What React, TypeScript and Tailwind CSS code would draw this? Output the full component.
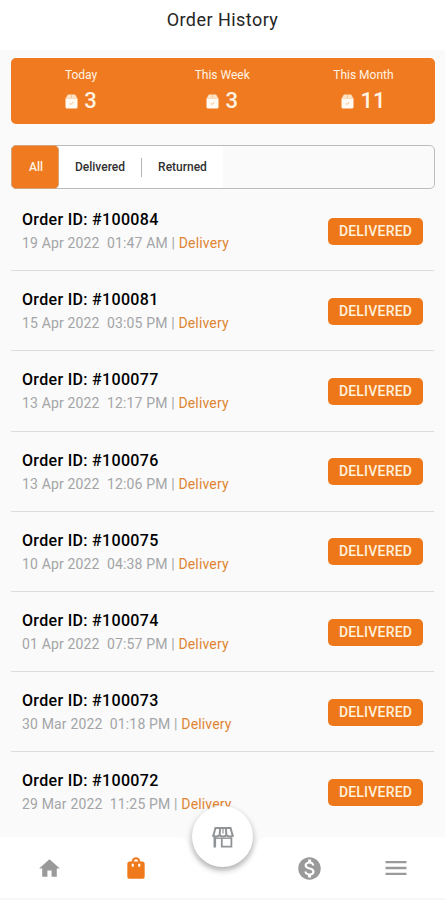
import { clsx } from 'clsx'
import { MdHome, MdMenu, MdMonetizationOn, MdShoppingBag } from 'react-icons/md'

interface Order {
  id: string
  date: string
  time: string
}

const orders: Order[] = [
  { id: '100084', date: '19 Apr 2022', time: '01:47 AM' },
  { id: '100081', date: '15 Apr 2022', time: '03:05 PM' },
  { id: '100077', date: '13 Apr 2022', time: '12:17 PM' },
  { id: '100076', date: '13 Apr 2022', time: '12:06 PM' },
  { id: '100075', date: '10 Apr 2022', time: '04:38 PM' },
  { id: '100074', date: '01 Apr 2022', time: '07:57 PM' },
  { id: '100073', date: '30 Mar 2022', time: '01:18 PM' },
  { id: '100072', date: '29 Mar 2022', time: '11:25 PM' },
]

const stats = [
  { label: 'Today', value: 3 },
  { label: 'This Week', value: 3 },
  { label: 'This Month', value: 11 },
]

function PackageIcon() {
  return (
    <svg viewBox="0 0 13 15" className="h-[15px] w-[13px]" aria-hidden="true">
      <path d="M3.4 0.5h6.2q.6 0 .9.5l1.6 3H.9l1.6-3q.3-.5.9-.5z" fill="#fde3c6" />
      <path d="M.5 4.2h12V13a1.5 1.5 0 0 1-1.5 1.5H2A1.5 1.5 0 0 1 .5 13z" fill="#fffaf2" />
      <path d="M6.5 0.8V4" stroke="#f6b882" strokeWidth="0.7" />
      <path d="M4.8 9.4l1.2 1.1 2.2-2.4" fill="none" stroke="#f0b078" strokeWidth="0.9" />
    </svg>
  )
}

function StoreIcon() {
  return (
    <svg
      viewBox="0 0 22 22"
      className="h-[22px] w-[22px]"
      fill="none"
      stroke="#919496"
      strokeWidth="2"
      aria-hidden="true"
    >
      <path d="M2.8 2h16.4" />
      <path d="M3.6 1.6L1.4 9.4M18.4 1.6l2.2 7.8M8.2 1.6L7.6 9M13.8 1.6l.6 7.4" />
      <path d="M11 2v5.5" strokeWidth="1.2" />
      <path d="M.4 9.2c1.6 1.8 5 1.8 7.2 0 1.8 1.8 5 1.8 6.8 0 2.2 1.8 5.6 1.8 7.2 0" />
      <path d="M2.8 10.5v11" strokeWidth="2.6" />
      <path d="M9.8 12.4v8.2h9.6v-9.2" strokeWidth="1.8" />
      <path d="M2 12.2h17.5" strokeWidth="1.4" />
    </svg>
  )
}

function StatsCard() {
  return (
    <section className="mr-[10.5px] ml-[11px] mt-2 grid h-[66px] grid-cols-3 rounded-[5px] bg-[#f07a20] text-[#fff4e4]">
      {stats.map((stat) => (
        <div key={stat.label} className="flex flex-col items-center pt-[9px] pr-px">
          <span className="text-[12px] leading-[17px]">{stat.label}</span>
          <span className="mt-px flex items-center gap-[6px] text-[22px] leading-[32px] font-medium">
            <PackageIcon />
            {stat.value}
          </span>
        </div>
      ))}
    </section>
  )
}

function FilterTabs() {
  return (
    <div className="mr-[10.5px] ml-[11px] mt-[21px] flex h-[44px] items-stretch rounded-[5px] border border-[#bcbcbc] text-[12px] font-medium text-[#303030]">
      <button
        type="button"
        className="-my-px -ml-px w-[48px] rounded-[5px] border border-[#d5a27a] bg-[#f07a20] pl-[2px] text-[#fff4e4]"
      >
        All
      </button>
      <div className="flex items-center bg-white">
        <button type="button" className="w-[82px]">
          Delivered
        </button>
        <span className="h-[19px] w-px bg-[#b5b5b5]" />
        <button type="button" className="w-[81px]">
          Returned
        </button>
      </div>
    </div>
  )
}

function OrderRow({ order, last }: { order: Order; last: boolean }) {
  return (
    <li
      className={clsx(
        'mx-[11px] flex h-[80.2px] items-center justify-between border-b pr-[11px] pl-[11px]',
        last ? 'border-transparent' : 'border-[#dcdddf]',
      )}
    >
      <div className="pt-px">
        <p className="text-[16px] leading-[25px] font-medium tracking-[0.32px] text-black">
          Order ID: #{order.id}
        </p>
        <p className="text-[14px] leading-[23px] tracking-[0.16px] whitespace-pre text-[#a3a5a7]">
          {order.date}
          {'  '}
          {order.time} | <span className="text-[#df8532]">Delivery</span>
        </p>
      </div>
      <span className="mt-px flex h-[27px] w-[95px] items-center justify-center rounded-[5px] bg-[#ee7819] text-[14px] font-medium tracking-[0.2px] text-[#fff0dc]">
        DELIVERED
      </span>
    </li>
  )
}

function BottomNav() {
  return (
    <nav className="absolute inset-x-0 bottom-0 h-[94px]">
      <svg viewBox="0 0 445 94" className="absolute inset-0 h-full w-full" aria-hidden="true">
        <path
          d="M0 31H178C186 31 188 37 191 44C197 58 208 65 223 65C238 65 249 58 254 44C257 37 260 31 268 31H445V94H0Z"
          fill="#ffffff"
        />
      </svg>
      <div className="relative grid h-full grid-cols-[98px_76px_98px_75px_98px] items-end border-b-2 border-[#f7f7f7] pb-4 text-[#9a9a9a]">
        <span className="flex h-[28px] items-center justify-center">
          <MdHome size={25} />
        </span>
        <span className="flex h-[28px] items-center justify-center text-[#ee7a1c]">
          <MdShoppingBag size={26} />
        </span>
        <span />
        <span className="flex h-[28px] items-center justify-center">
          <MdMonetizationOn size={27} />
        </span>
        <span className="flex h-[28px] items-center justify-center">
          <MdMenu size={28} />
        </span>
      </div>
      <button
        type="button"
        aria-label="Store"
        className="absolute top-0 left-[192px] flex h-[61px] w-[61px] items-center justify-center rounded-full bg-white shadow-[0_3px_6px_rgba(0,0,0,0.32)]"
      >
        <StoreIcon />
      </button>
    </nav>
  )
}

export default function App() {
  return (
    <div className="relative h-[900px] w-[445px] overflow-hidden bg-[#fafafa] font-[Roboto,sans-serif]">
      <header className="flex h-[50px] items-start justify-center bg-white pt-[7px]">
        <h1 className="text-[18px] leading-[26px] tracking-[0.45px] text-[#252525]">Order History</h1>
      </header>
      <StatsCard />
      <FilterTabs />
      <ul className="mt-[2px]">
        {orders.map((order, index) => (
          <OrderRow key={order.id} order={order} last={index === orders.length - 1} />
        ))}
      </ul>
      <BottomNav />
    </div>
  )
}
